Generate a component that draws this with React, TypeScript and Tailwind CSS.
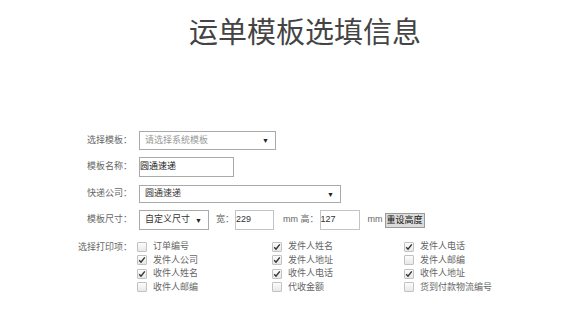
import React from 'react';

const font = "font-['Liberation_Sans','Noto_Sans_CJK_SC',sans-serif]";

const Arrow: React.FC = () => (
  <span className="text-[7px] leading-none text-[#222]">▼</span>
);

const FakeSelect: React.FC<{ w: string; h: string; text: string; muted?: boolean }> = ({ w, h, text, muted }) => (
  <div className={`${w} ${h} flex items-center justify-between border border-[#a9a9a9] bg-white pl-[5px] pr-[6px]`}>
    <span className={`text-[9px] ${muted ? 'text-[#999]' : 'text-[#333]'}`}>{text}</span>
    <Arrow />
  </div>
);

const Check: React.FC<{ on: boolean }> = ({ on }) => (
  <span className="flex h-[10px] w-[10px] items-center justify-center rounded-[1px] border border-[#c2c2c2] bg-gradient-to-b from-[#fcfcfc] to-[#e8e8e8]">
    {on && (
      <svg width="8" height="8" viewBox="0 0 8 8">
        <path d="M1.2 4.3 L3 6.2 L6.8 1.4" fill="none" stroke="#333" strokeWidth="1.4" />
      </svg>
    )}
  </span>
);

const items: [string, boolean][] = [
  ['订单编号', false], ['发件人姓名', true], ['发件人电话', true],
  ['发件人公司', true], ['发件人地址', true], ['发件人邮编', false],
  ['收件人姓名', true], ['收件人电话', true], ['收件人地址', true],
  ['收件人邮编', false], ['代收金额', false], ['货到付款物流编号', false],
];

const Label: React.FC<{ text: string }> = ({ text }) => (
  <div className="w-[133px] shrink-0 pr-[1px] text-right text-[9px] text-[#666]">{text}</div>
);

const App: React.FC = () => {
  return (
    <div className={`h-[328px] w-[571px] bg-white ${font}`}>
      {/* Title */}
      <div className="pl-[189px] pt-[16px]">
        <h1 className="text-[29px] font-normal leading-[34px] text-[#444]">运单模板选填信息</h1>
      </div>

      <div className="mt-[81px] flex flex-col">
        <div className="flex items-center">
          <Label text="选择模板：" />
          <div className="ml-[6px]">
            <FakeSelect w="w-[137px]" h="h-[19px]" text="请选择系统模板" muted />
          </div>
        </div>

        <div className="mt-[7px] flex items-center">
          <Label text="模板名称：" />
          <div className="ml-[6px] flex h-[20px] w-[95px] items-center border border-[#a9a9a9] bg-white text-[9px] text-[#222]">
            圆通速递
          </div>
        </div>

        <div className="mt-[8px] flex items-center">
          <Label text="快递公司：" />
          <div className="ml-[6px]">
            <FakeSelect w="w-[202px]" h="h-[18px]" text="圆通速递" />
          </div>
        </div>

        <div className="mt-[7px] flex items-center text-[9px] text-[#666]">
          <Label text="模板尺寸：" />
          <div className="ml-[6px]">
            <FakeSelect w="w-[70px]" h="h-[20px]" text="自定义尺寸" />
          </div>
          <span className="ml-[7px]">宽：</span>
          <div className="ml-[1px] flex h-[20px] w-[39px] items-center border border-[#c4c4c4] bg-white text-[9px] text-[#333]">229</div>
          <span className="ml-[9px]">mm 高：</span>
          <div className="ml-[1px] flex h-[20px] w-[40px] items-center border border-[#c4c4c4] bg-white text-[9px] text-[#333]">127</div>
          <span className="ml-[8px]">mm</span>
          <button className="ml-[2px] h-[15px] border border-[#9a9a9a] bg-[#dcdcdc] px-[1px] text-[9px] leading-none text-[#111]">重设高度</button>
        </div>

        <div className="mt-[10px] flex items-start">
          <div className="w-[133px] shrink-0 pr-[1px] text-right text-[9px] leading-[14px] text-[#666]">选择打印项：</div>
          <div className="ml-[4px] grid grid-cols-[135px_132px_140px]">
            {items.map(([name, on]) => (
              <div key={name} className="flex h-[13.5px] items-center gap-[6px] text-[9px] text-[#666]">
                <Check on={on} />
                <span>{name}</span>
              </div>
            ))}
          </div>
        </div>
      </div>
    </div>
  );
};

export default App;
